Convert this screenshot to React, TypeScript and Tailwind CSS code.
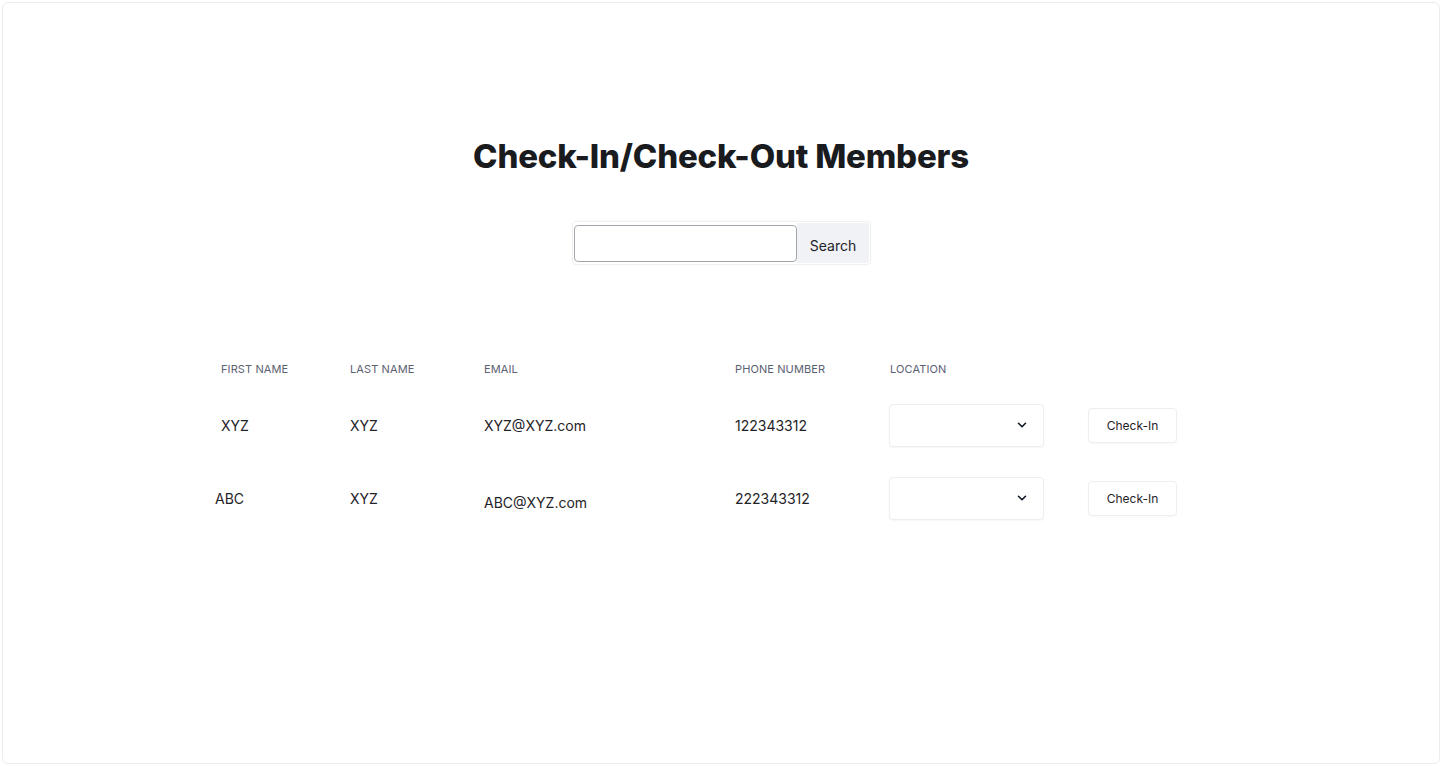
import React from "react";

const rows = [
  { first: "XYZ", last: "XYZ", email: "XYZ@XYZ.com", phone: "122343312", firstOffset: "pl-0", emailOffset: "pt-0" },
  { first: "ABC", last: "XYZ", email: "ABC@XYZ.com", phone: "222343312", firstOffset: "-ml-[6px]", emailOffset: "pt-[8px]" },
];

function Chevron() {
  return (
    <svg width="14" height="14" viewBox="0 0 24 24" fill="none" stroke="#111827" strokeWidth="2.75" strokeLinecap="round" strokeLinejoin="round">
      <path d="M6 9l6 6 6-6" />
    </svg>
  );
}

export default function App() {
  return (
    <div className="w-[1442px] h-[766px] bg-white p-[2px]" style={{ fontFamily: "Inter, 'Liberation Sans', sans-serif" }}>
      <div className="w-full h-full rounded-[6px] border border-[#ececec] bg-white flex flex-col items-center">
        <h1 className="mt-[129px] text-[33px] leading-[48px] font-extrabold text-[#1a1b1e] tracking-[-0.2px]">
          Check-In/Check-Out Members
        </h1>
        <div className="mt-[41px] ml-[1px] flex items-center p-[1px] rounded-[4px] border border-[#f0f0f0] shadow-[0_0_2px_rgba(0,0,0,0.04)]">
          <input className="w-[223px] h-[37px] rounded-[4px] border border-[#a3a7ad] bg-white outline-none" />
          <button className="w-[72px] h-[40px] bg-[#f0f2f5] text-[14px] text-[#1f2328] pt-[4px] rounded-r-[3px]">Search</button>
        </div>

        <div className="self-start ml-[218px] mt-[95px] text-[14px] text-[#1f2328]">
          <div className="flex items-center h-[18px] text-[11px] text-[#5b6170] tracking-[0.1px]">
            <div className="w-[129px]">FIRST NAME</div>
            <div className="w-[134px]">LAST NAME</div>
            <div className="w-[251px]">EMAIL</div>
            <div className="w-[155px]">PHONE NUMBER</div>
            <div>LOCATION</div>
          </div>
          {rows.map((r, i) => (
            <div key={i} className={`flex items-center h-[42px] ${i === 0 ? "mt-[26px]" : "mt-[31px]"}`}>
              <div className={`w-[129px] ${r.firstOffset}`}>{r.first}</div>
              <div className={`w-[134px] ${i === 1 ? "ml-[6px]" : ""}`}>{r.last}</div>
              <div className={`w-[251px] ${r.emailOffset}`}>{r.email}</div>
              <div className="w-[154px]">{r.phone}</div>
              <div className="w-[155px] h-[43px] rounded-[4px] border border-[#eceef1] bg-white shadow-[0_1px_2px_rgba(0,0,0,0.04)] flex items-center justify-end pr-[14px]">
                <Chevron />
              </div>
              <button className="ml-[44px] w-[89px] h-[35px] rounded-[4px] border border-[#eceef1] bg-white text-[12px] text-[#1f2328] pt-[2px] shadow-[0_1px_2px_rgba(0,0,0,0.03)]">
                Check-In
              </button>
            </div>
          ))}
        </div>
      </div>
    </div>
  );
}
